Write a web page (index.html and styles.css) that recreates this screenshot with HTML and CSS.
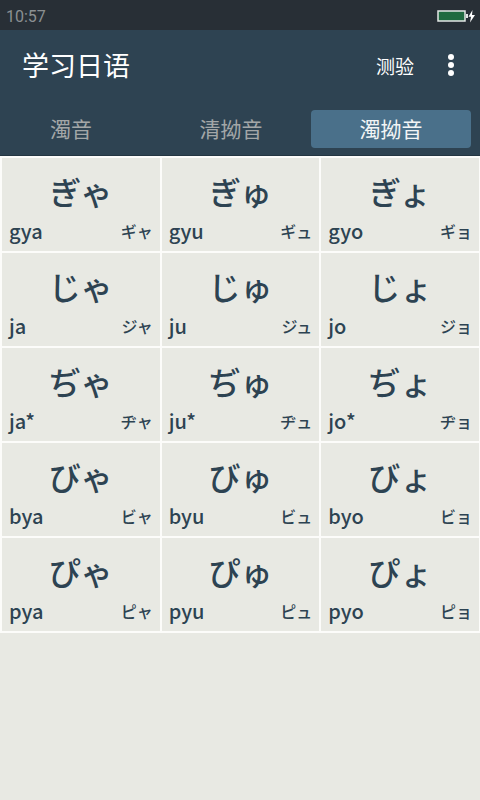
FILE: index.html
```html
<!DOCTYPE html>
<html lang="zh-CN">
<head>
  <meta charset="UTF-8">
  <meta name="viewport" content="width=device-width, initial-scale=1.0">
  <title>学习日语</title>
  <link rel="stylesheet" href="styles.css">
</head>
<body>
  <div class="status-bar">
    <span class="clock">10:57</span>
    <svg class="battery" width="39" height="14" viewBox="0 0 39 14">
      <rect x="2" y="2" width="27" height="10" fill="#206a40" stroke="#e4e8e6" stroke-width="1.5"/>
      <rect x="30" y="5" width="2" height="4" fill="#e4e8e6"/>
      <path d="M36.5 1 L32.5 7.8 H35 L34 13.5 L39 6 H36 Z" fill="#fff"/>
    </svg>
  </div>

  <header>
    <div class="toolbar">
      <h1>学习日语</h1>
      <button class="quiz-button">测验</button>
      <button class="menu-button" aria-label="更多">
        <svg width="6" height="22" viewBox="0 0 6 22" fill="#fff">
          <circle cx="3" cy="3" r="3"/>
          <circle cx="3" cy="11" r="3"/>
          <circle cx="3" cy="19" r="3"/>
        </svg>
      </button>
    </div>
    <nav class="tabs">
      <button class="tab">濁音</button>
      <button class="tab">清拗音</button>
      <button class="tab active">濁拗音</button>
    </nav>
  </header>

  <main class="kana-grid" id="kana-grid" lang="ja"></main>

  <script>
    const sounds = [
      { kana: 'ぎゃ', romaji: 'gya', katakana: 'ギャ' },
      { kana: 'ぎゅ', romaji: 'gyu', katakana: 'ギュ' },
      { kana: 'ぎょ', romaji: 'gyo', katakana: 'ギョ' },
      { kana: 'じゃ', romaji: 'ja', katakana: 'ジャ' },
      { kana: 'じゅ', romaji: 'ju', katakana: 'ジュ' },
      { kana: 'じょ', romaji: 'jo', katakana: 'ジョ' },
      { kana: 'ぢゃ', romaji: 'ja*', katakana: 'ヂャ' },
      { kana: 'ぢゅ', romaji: 'ju*', katakana: 'ヂュ' },
      { kana: 'ぢょ', romaji: 'jo*', katakana: 'ヂョ' },
      { kana: 'びゃ', romaji: 'bya', katakana: 'ビャ' },
      { kana: 'びゅ', romaji: 'byu', katakana: 'ビュ' },
      { kana: 'びょ', romaji: 'byo', katakana: 'ビョ' },
      { kana: 'ぴゃ', romaji: 'pya', katakana: 'ピャ' },
      { kana: 'ぴゅ', romaji: 'pyu', katakana: 'ピュ' },
      { kana: 'ぴょ', romaji: 'pyo', katakana: 'ピョ' }
    ];

    const grid = document.getElementById('kana-grid');

    sounds.forEach(sound => {
      const cell = document.createElement('button');
      cell.className = 'cell';
      cell.innerHTML = `
        <span class="kana">${sound.kana}</span>
        <span class="reading">
          <span class="romaji">${sound.romaji}</span>
          <span class="katakana">${sound.katakana}</span>
        </span>
      `;
      grid.appendChild(cell);
    });
  </script>
</body>
</html>
```
FILE: styles.css
```css
* {
  box-sizing: border-box;
}

body {
  margin: 0;
  font-family: "Noto Sans CJK SC", sans-serif;
  background-color: #e8e9e3;
  color: #2d4352;
  min-height: 100vh;
  overflow-x: hidden;
}

button {
  border: none;
  padding: 0;
  background: none;
  color: inherit;
  font-family: inherit;
  cursor: pointer;
}

.status-bar {
  display: flex;
  align-items: center;
  justify-content: space-between;
  height: 30px;
  padding: 2px 5px 0 6px;
  background-color: #282f36;
}

.clock {
  font-family: Roboto, sans-serif;
  font-size: 16px;
  color: #8b8f92;
}

header {
  background-color: #2e4352;
  border-bottom: 1px solid #243642;
  overflow: hidden;
}

.toolbar {
  display: flex;
  align-items: center;
  height: 70px;
  padding: 0 26px 0 22px;
  color: #fff;
}

h1 {
  flex: 1;
  margin: 0;
  font-size: 27px;
  line-height: 40px;
  font-weight: 400;
}

.quiz-button {
  margin-right: 34px;
  font-size: 19px;
}

.menu-button {
  display: flex;
}

/* the strip is scrolled a little to the left */
.tabs {
  display: flex;
  margin: 10px 9px 7px -9px;
}

.tab {
  flex: 1;
  height: 38px;
  padding-bottom: 2px;
  border-radius: 4px;
  font-size: 21px;
  line-height: 36px;
  color: #a3a7a8;
}

.tab.active {
  background-color: #4a708a;
  color: #f2f5f6;
}

.kana-grid {
  display: grid;
  grid-template-columns: repeat(3, 1fr);
  gap: 2px;
  padding: 2px 1px 2px 2px;
  background-color: #fcfcfa;
}

.cell {
  display: flex;
  flex-direction: column;
  justify-content: space-between;
  height: 93px;
  padding: 13px 7px 6px;
  background-color: #e8e9e3;
  font-family: "Noto Sans CJK JP", sans-serif;
  font-weight: 500;
}

.kana {
  align-self: center;
  font-size: 32px;
  line-height: 40px;
}

.reading {
  display: flex;
  align-items: center;
  justify-content: space-between;
  width: 100%;
  line-height: 28px;
}

.romaji {
  font-size: 20px;
}

.katakana {
  font-size: 16px;
}
```
